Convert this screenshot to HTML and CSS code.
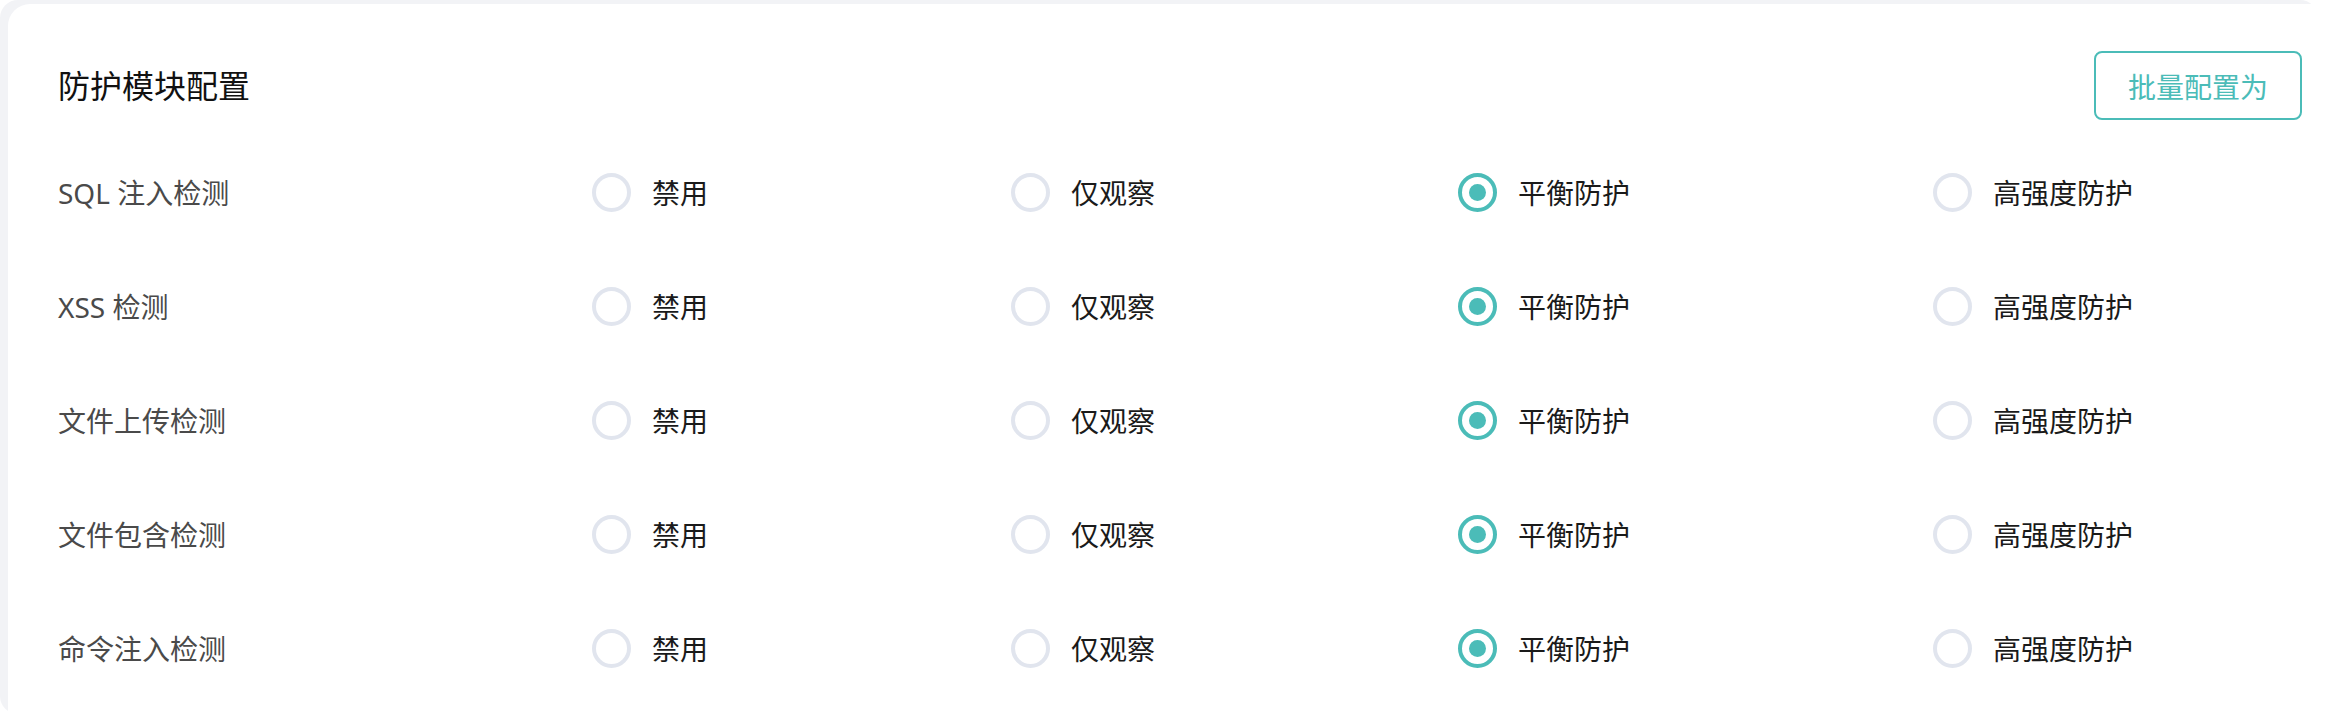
FILE: index.html
```html
<!DOCTYPE html>
<html lang="zh-CN">
<head>
  <meta charset="UTF-8">
  <title>防护模块配置</title>
  <link rel="stylesheet" href="styles.css">
</head>
<body>
  <div class="shell">
    <div class="card">
      <div class="card-head">
        <div class="title">防护模块配置</div>
        <button class="batch-btn">批量配置为</button>
      </div>

      <div class="row">
        <div class="row-label">SQL 注入检测</div>
        <div class="options">
          <label class="opt"><span class="radio"></span>禁用</label>
          <label class="opt"><span class="radio"></span>仅观察</label>
          <label class="opt"><span class="radio checked"></span>平衡防护</label>
          <label class="opt"><span class="radio"></span>高强度防护</label>
        </div>
      </div>

      <div class="row">
        <div class="row-label">XSS 检测</div>
        <div class="options">
          <label class="opt"><span class="radio"></span>禁用</label>
          <label class="opt"><span class="radio"></span>仅观察</label>
          <label class="opt"><span class="radio checked"></span>平衡防护</label>
          <label class="opt"><span class="radio"></span>高强度防护</label>
        </div>
      </div>

      <div class="row">
        <div class="row-label">文件上传检测</div>
        <div class="options">
          <label class="opt"><span class="radio"></span>禁用</label>
          <label class="opt"><span class="radio"></span>仅观察</label>
          <label class="opt"><span class="radio checked"></span>平衡防护</label>
          <label class="opt"><span class="radio"></span>高强度防护</label>
        </div>
      </div>

      <div class="row">
        <div class="row-label">文件包含检测</div>
        <div class="options">
          <label class="opt"><span class="radio"></span>禁用</label>
          <label class="opt"><span class="radio"></span>仅观察</label>
          <label class="opt"><span class="radio checked"></span>平衡防护</label>
          <label class="opt"><span class="radio"></span>高强度防护</label>
        </div>
      </div>

      <div class="row">
        <div class="row-label">命令注入检测</div>
        <div class="options">
          <label class="opt"><span class="radio"></span>禁用</label>
          <label class="opt"><span class="radio"></span>仅观察</label>
          <label class="opt"><span class="radio checked"></span>平衡防护</label>
          <label class="opt"><span class="radio"></span>高强度防护</label>
        </div>
      </div>
    </div>
  </div>
</body>
</html>
```

FILE: styles.css
```css
* {
  box-sizing: border-box;
  font-family: "Noto Sans", "Noto Sans CJK SC", sans-serif;
}

body {
  margin: 0;
  background-color: #fff;
  overflow: hidden;
  height: 726px;
}

/* grey frame peeking out on the top and left */
.shell {
  width: 2318px;
  height: 714px;
  background-color: #f2f3f6;
  border-radius: 18px;
  padding: 4px 0 0 8px;
}

.card {
  width: 2330px;
  height: 722px;
  background-color: #fff;
  border-radius: 22px 0 0 0;
  padding: 47px 0 0 50px;
}

.card-head {
  display: flex;
  justify-content: space-between;
  align-items: center;
  width: 2244px;
  height: 69px;
  margin-bottom: 15px;
}

.title {
  font-size: 32px;
  line-height: 40px;
  color: #111;
}

.batch-btn {
  width: 208px;
  height: 69px;
  background-color: #fff;
  border: 2px solid #4bbcb8;
  border-radius: 8px;
  color: #4bbcb8;
  font-size: 28px;
  padding: 0;
  cursor: pointer;
}

.row {
  display: flex;
  align-items: center;
  height: 114px;
}

.row-label {
  width: 534px;
  font-size: 28px;
  color: #4a4a4a;
}

.options {
  display: flex;
  align-items: center;
  gap: 303px;
}

.opt {
  display: flex;
  align-items: center;
  gap: 21px;
  font-size: 28px;
  color: #1a1a1a;
  cursor: pointer;
}

.radio {
  width: 39px;
  height: 39px;
  border: 4px solid #e1e5ee;
  border-radius: 50%;
  display: flex;
  justify-content: center;
  align-items: center;
}

.radio.checked {
  border-color: #4bbcb8;
}

.radio.checked::after {
  content: "";
  width: 17px;
  height: 17px;
  border-radius: 50%;
  background-color: #4bbcb8;
}
```
